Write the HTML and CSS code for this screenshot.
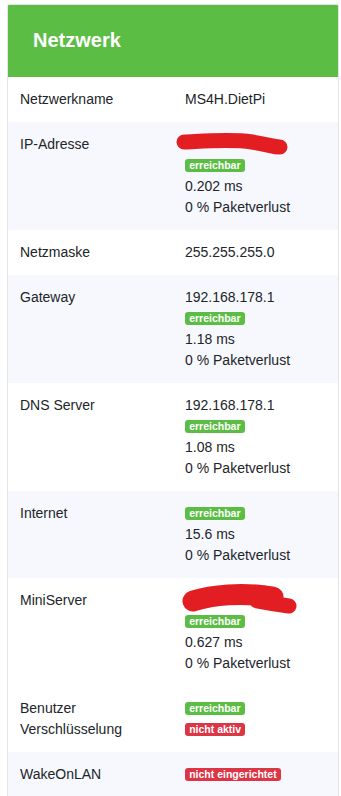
FILE: index.html
```html
<!DOCTYPE html>
<html lang="de">

<head>
    <meta charset="UTF-8">
    <meta name="viewport" content="width=device-width, initial-scale=1.0">
    <title>Netzwerk</title>
    <link rel="stylesheet" href="styles.css">
</head>

<body>

    <div class="page">
        <div class="card">
            <div class="card-header">
                <h2>Netzwerk</h2>
            </div>

            <table class="info-table">
                <tr>
                    <td>Netzwerkname</td>
                    <td>MS4H.DietPi</td>
                </tr>
                <tr class="striped">
                    <td>IP-Adresse</td>
                    <td>
                        <!-- redacted address -->
                        <svg class="redacted" width="120" height="21" viewBox="0 0 120 21">
                            <path d="M7,8 C30,7 55,5 75,8 S95,13 103,13" />
                        </svg>
                        <span class="badge badge-ok">erreichbar</span><br>
                        0.202 ms<br>
                        0 % Paketverlust
                    </td>
                </tr>
                <tr>
                    <td>Netzmaske</td>
                    <td>255.255.255.0</td>
                </tr>
                <tr class="striped">
                    <td>Gateway</td>
                    <td>
                        192.168.178.1<br>
                        <span class="badge badge-ok">erreichbar</span><br>
                        1.18 ms<br>
                        0 % Paketverlust
                    </td>
                </tr>
                <tr>
                    <td>DNS Server</td>
                    <td>
                        192.168.178.1<br>
                        <span class="badge badge-ok">erreichbar</span><br>
                        1.08 ms<br>
                        0 % Paketverlust
                    </td>
                </tr>
                <tr class="striped">
                    <td>Internet</td>
                    <td>
                        <span class="badge badge-ok">erreichbar</span><br>
                        15.6 ms<br>
                        0 % Paketverlust
                    </td>
                </tr>
                <tr>
                    <td>MiniServer</td>
                    <td>
                        <svg class="redacted" width="130" height="21" viewBox="0 0 130 21">
                            <path class="thick" d="M16,11 C35,5 65,2 96,7" />
                            <path d="M80,11 C95,14 105,15 112,16" />
                        </svg>
                        <span class="badge badge-ok">erreichbar</span><br>
                        0.627 ms<br>
                        0 % Paketverlust
                    </td>
                </tr>
                <tr>
                    <td>Benutzer Verschlüsselung</td>
                    <td>
                        <span class="badge badge-ok">erreichbar</span><br>
                        <span class="badge badge-off">nicht aktiv</span>
                    </td>
                </tr>
                <tr class="striped">
                    <td>WakeOnLAN</td>
                    <td><span class="badge badge-off">nicht eingerichtet</span></td>
                </tr>
            </table>
        </div>
    </div>

</body>

</html>
```

FILE: styles.css
```css
* {
    margin: 0;
    padding: 0;
    box-sizing: border-box;
}

body {
    font-family: "Liberation Sans", Arial, sans-serif;
    font-size: 14px;
    line-height: 21px;
    color: #212529;
    background: #fff;
}

.page {
    padding: 4px 2px 0 7px;
}

/* card */
.card {
    border: 1px solid #e2e4e8;
    border-radius: 2px;
    overflow: hidden;
}

.card-header {
    background-color: #5cbd45;
    padding: 23px 25px 24px;
}

.card-header h2 {
    color: #fff;
    font-size: 20px;
    font-weight: bold;
    line-height: 25px;
}

/* table */
.info-table {
    width: 100%;
    border-collapse: collapse;
    table-layout: fixed;
}

.info-table td {
    width: 50%;
    padding: 12px;
    vertical-align: top;
}

.striped {
    background-color: #f6f8fd;
}

/* badges */
.badge {
    display: inline-block;
    font-size: 10.5px;
    font-weight: bold;
    line-height: 1;
    padding: 1.5px 4.2px;
    border-radius: 3px;
    color: #fff;
    vertical-align: 1px;
}

.badge-ok {
    background-color: #5cbd45;
}

.badge-off {
    background-color: #dc3545;
}

/* scribbled-out values */
.redacted {
    display: block;
    margin-left: -8px;
    overflow: visible;
}

.redacted path {
    fill: none;
    stroke: #e31e22;
    stroke-width: 15;
    stroke-linecap: round;
}

.redacted .thick {
    stroke-width: 21;
}
```
